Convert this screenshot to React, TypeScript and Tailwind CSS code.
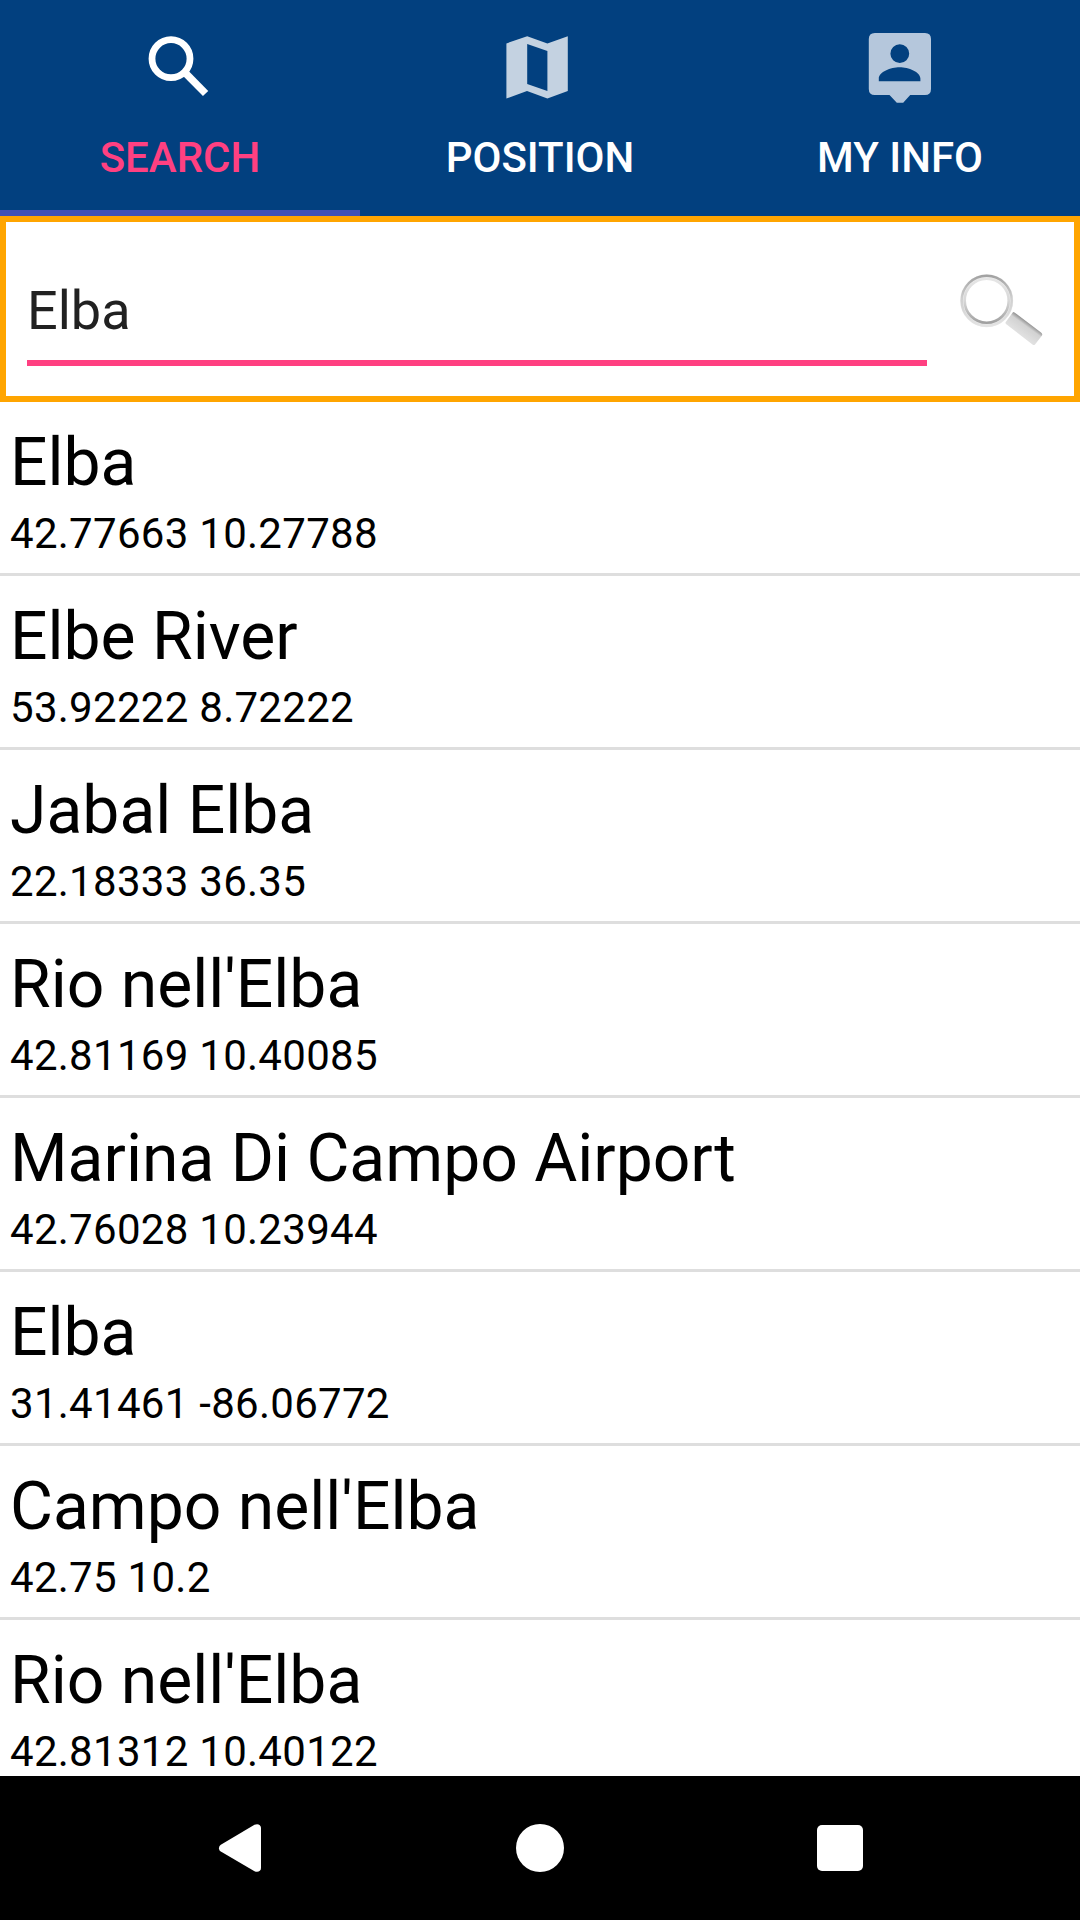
import React from 'react';

interface Place {
  name: string;
  coords: string;
}

const places: Place[] = [
  { name: 'Elba', coords: '42.77663 10.27788' },
  { name: 'Elbe River', coords: '53.92222 8.72222' },
  { name: 'Jabal Elba', coords: '22.18333 36.35' },
  { name: "Rio nell'Elba", coords: '42.81169 10.40085' },
  { name: 'Marina Di Campo Airport', coords: '42.76028 10.23944' },
  { name: 'Elba', coords: '31.41461 -86.06772' },
  { name: "Campo nell'Elba", coords: '42.75 10.2' },
  { name: "Rio nell'Elba", coords: '42.81312 10.40122' }
];

const SearchIcon = () => (
  <svg className="w-24 h-24" viewBox="0 0 96 96" fill="none" stroke="#ffffff">
    <circle cx="39" cy="40.7" r="19" strokeWidth="6.8" />
    <path d="M54 55.7L73.6 75.5" strokeWidth="7.4" />
  </svg>
);

const MapIcon = () => (
  <svg className="w-24 h-24" viewBox="0 0 96 96" fill="#c4d2e1" fillRule="evenodd">
    <path d="M14.4 25.4L35.2 18.3L55.4 25.6L75.8 18.3V73L55.4 80.6L35 73L14.4 80.6ZM35.2 26V66L55.4 73V33Z" />
  </svg>
);

const PersonIcon = () => (
  <svg className="w-24 h-24" viewBox="0 0 96 96" fill="#b5c7dc" fillRule="evenodd">
    <path d="M22.8 15H73Q79 15 79 21V71Q79 77 73 77H58.2L51.2 84.7H44.8L37.5 77H22.8Q16.8 77 16.8 71V21Q16.8 15 22.8 15ZM47.8 26.3a9.4 9.4 0 1 0 0 18.8a9.4 9.4 0 1 0 0-18.8ZM26.8 63.2H68.4V60.6C68.4 54 56.5 49.3 47.6 49.3S26.8 54 26.8 60.6Z" />
  </svg>
);

const MagnifierIcon = () => (
  <svg className="w-24 h-24" viewBox="0 0 96 96" fill="none">
    <defs>
      <linearGradient id="rimOuter" x1="0" y1="0" x2="0" y2="1">
        <stop offset="0" stopColor="#a2a2a2" />
        <stop offset="0.45" stopColor="#cfcfcf" />
        <stop offset="1" stopColor="#e3e3e3" />
      </linearGradient>
      <linearGradient id="rimInner" x1="0" y1="0" x2="0" y2="1">
        <stop offset="0" stopColor="#e6e6e6" />
        <stop offset="0.5" stopColor="#d8d8d8" />
        <stop offset="1" stopColor="#a0a0a0" />
      </linearGradient>
      <linearGradient id="handle" gradientUnits="userSpaceOnUse" x1="75" y1="62" x2="67" y2="73">
        <stop offset="0" stopColor="#969696" />
        <stop offset="0.28" stopColor="#d2d2d2" />
        <stop offset="1" stopColor="#e0e0e0" />
      </linearGradient>
    </defs>
    <circle cx="34.7" cy="40.7" r="24" stroke="#ebebeb" strokeWidth="5" />
    <circle cx="34.7" cy="40.7" r="25" stroke="url(#rimOuter)" strokeWidth="2.4" />
    <circle cx="34.7" cy="40.7" r="22" stroke="url(#rimInner)" strokeWidth="2.6" />
    <path d="M60.7 52.4Q61.5 51.8 62.5 52.4L89 72.4Q90.8 73.9 90 75.4L83 84.4Q82 85.4 80.5 84.4L54 63.9Q53 62.9 53.8 61.9Z" fill="url(#handle)" />
  </svg>
);

const tabs = [
  { label: 'SEARCH', icon: SearchIcon, active: true },
  { label: 'POSITION', icon: MapIcon, active: false },
  { label: 'MY INFO', icon: PersonIcon, active: false }
];

const App: React.FC = () => {
  return (
    <div className="flex flex-col w-[1080px] h-[1920px] overflow-hidden bg-white font-[Roboto,sans-serif]">
      <header className="grid grid-cols-3 h-[216px] shrink-0 bg-[#02407f]">
        {tabs.map(({ label, icon: Icon, active }) => (
          <button
            key={label}
            className={
              active
                ? 'flex flex-col items-center pt-[18px] border-b-[6px] border-[#3f51b5] text-[#ff4081]'
                : 'flex flex-col items-center pt-[18px] border-b-[6px] border-transparent text-white'
            }
          >
            <Icon />
            <span className="mt-[19px] text-[42px] leading-[50px] font-medium">{label}</span>
          </button>
        ))}
      </header>

      <div className="flex h-[186px] shrink-0 border-[6px] border-[#ffa500] pl-[21px]">
        <div className="w-[900px] h-36 pt-[57px] border-b-[6px] border-[#ff4081]">
          <p className="text-[54px] leading-[64px] text-[#212121]">Elba</p>
        </div>
        <button className="ml-[25px] mt-[38px] h-24">
          <MagnifierIcon />
        </button>
      </div>

      <ul className="flex-1 min-h-0 overflow-hidden text-black">
        {places.map((place, index) => (
          <li key={index} className="h-[174px] pt-[17px] pl-[10px] border-b-[3px] border-[#dedede]">
            <p className="text-[66px] leading-[88px]">{place.name}</p>
            <p className="-mt-px text-[42px] leading-[55px] tracking-[0.28px]">{place.coords}</p>
          </li>
        ))}
      </ul>

      <nav className="flex items-center justify-center h-36 shrink-0 bg-black">
        <svg className="w-[300px] h-12" viewBox="0 0 300 48" fill="#ffffff">
          <path d="M130.8 20.8L164.5 0.8C167.5 -0.8 171 0.6 171 4V44C171 47.4 167.5 48.8 164.5 47.2L130.8 27.6C128.4 26 128.4 22.4 130.8 20.8Z" />
        </svg>
        <div className="flex justify-center w-[300px]">
          <span className="w-12 h-12 rounded-full bg-white" />
        </div>
        <div className="flex justify-center w-[300px]">
          <span className="w-[46px] h-[46px] rounded-[5px] bg-white" />
        </div>
      </nav>
    </div>
  );
};

export default App;
